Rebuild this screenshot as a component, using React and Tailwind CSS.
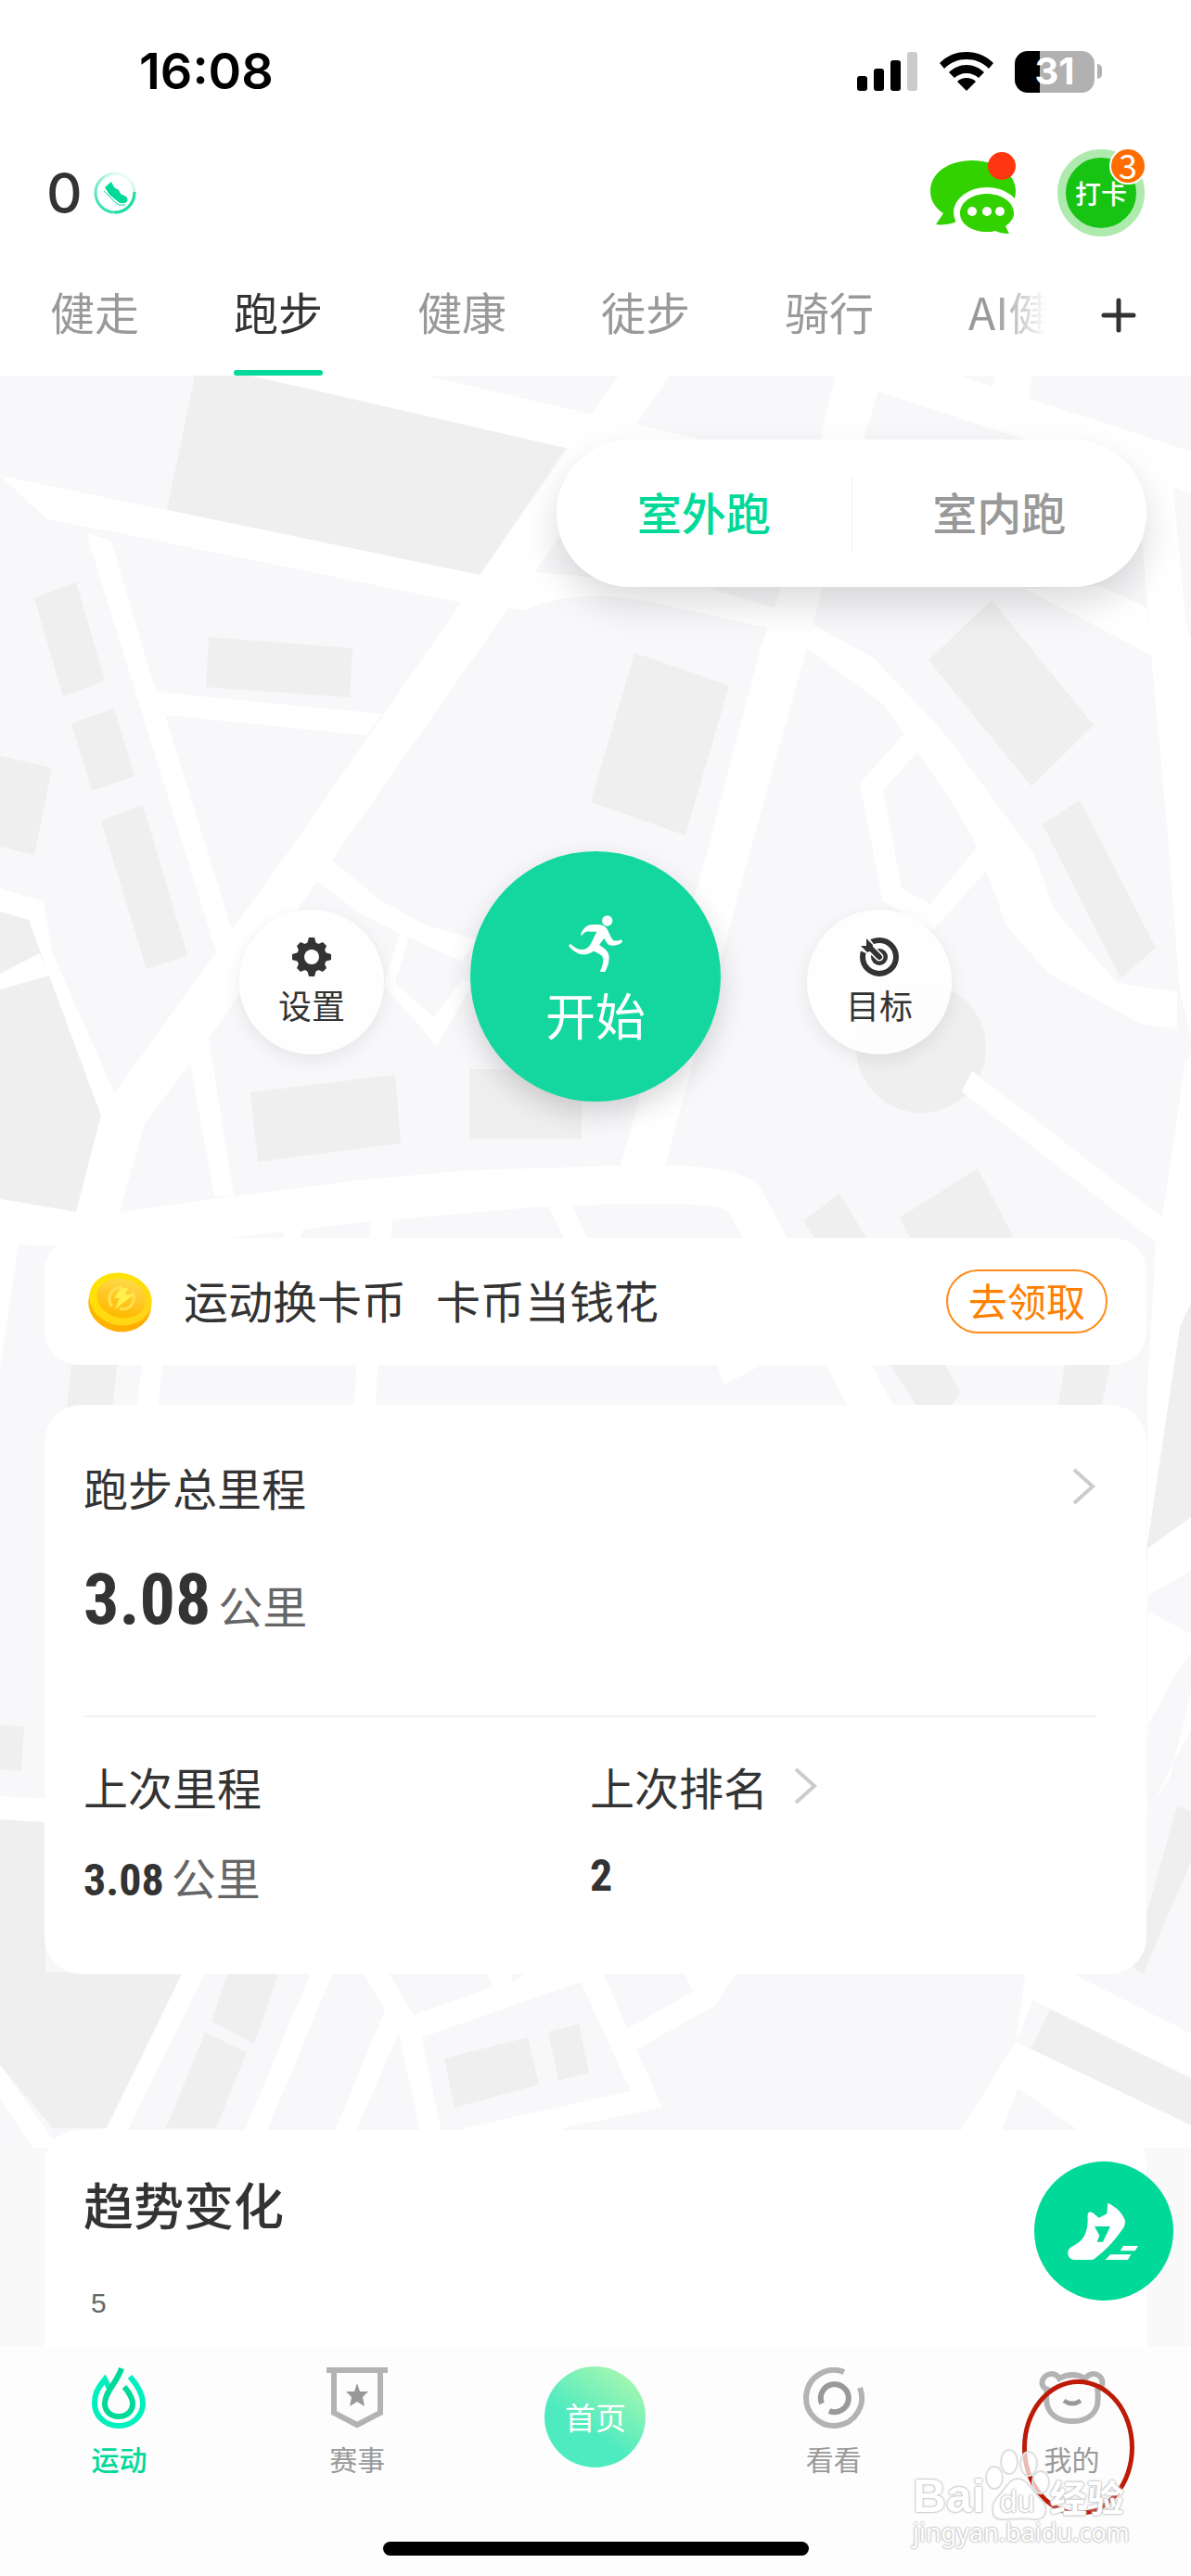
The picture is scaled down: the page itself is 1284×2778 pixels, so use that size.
import React, { useState } from 'react'

const cn = (...classes) => classes.filter(Boolean).join(' ')

const TABS = ['健走', '跑步', '健康', '徒步', '骑行', 'AI健身']

const StatusBar = () => (
  <div className="flex h-[150px] items-center justify-between pl-[150px] pr-[96px] pt-1 text-black">
    <span className="font-['Inter'] text-[54px] leading-none font-semibold">16:08</span>
    <div className="flex items-center gap-[23px]">
      <svg width="66" height="42" viewBox="0 0 66 42" aria-hidden="true">
        <rect x="0" y="26" width="11" height="16" rx="3" />
        <rect x="18" y="18" width="11" height="24" rx="3" />
        <rect x="36" y="9" width="11" height="33" rx="3" />
        <rect x="54" y="0" width="11" height="42" rx="3" fill="#cbcbcb" />
      </svg>
      <svg width="58" height="42" viewBox="0 0 58 42" aria-hidden="true">
        <path d="M29 0C18 0 8 4 0 12l5 6C12 11 20 8 29 8s17 3 24 10l5-6C50 4 40 0 29 0Z" />
        <path d="M29 14c-7 0-14 3-19 8l6 6c3-3 8-5 13-5s10 2 13 5l6-6c-5-5-12-8-19-8Z" />
        <path d="M29 28c-4 0-7 1-10 4l10 10 10-10c-3-3-6-4-10-4Z" />
      </svg>
      <div className="flex items-center gap-[3px]">
        <div className="flex h-[45px] w-[86px] items-center justify-center rounded-[14px] bg-[linear-gradient(90deg,#000_31%,#b1b1b1_31%)] font-['Inter'] text-[40px] leading-none font-bold text-white">
          31
        </div>
        <div className="h-4 w-[5px] rounded-r-full bg-[#b1b1b1]" />
      </div>
    </div>
  </div>
)

const StepRing = () => (
  <svg width="46" height="46" viewBox="0 0 46 46" fill="none" aria-hidden="true">
    <defs>
      <linearGradient id="ring" x1="0.2" y1="1" x2="0.8" y2="0">
        <stop offset="0" stopColor="#2be0ab" />
        <stop offset="0.5" stopColor="#7fecce" />
        <stop offset="1" stopColor="#fff" />
      </linearGradient>
    </defs>
    <circle cx="23" cy="23" r="21" stroke="url(#ring)" strokeWidth="3" />
    <path d="M44 22C44 34 35 44 23 44" stroke="#1fdda4" strokeWidth="3" />
    <path d="M12 17 19 11l3 6 5 3 2 4 6 3c3 3 1 7-2 7h-5L17 25Z" fill="#00d998" />
    <path d="m11 21 12 12 4 3h7" stroke="#00d998" strokeWidth="1" />
  </svg>
)

const ChatIcon = () => (
  <svg width="94" height="92" viewBox="0 0 94 92" aria-hidden="true">
    <path d="M46 9C20 9 1 23 1 42c0 10 5 18 14 24L7 78c8 1 15 0 22-3 8 2 20 2 30 0 22-5 34-17 34-33C93 23 72 9 46 9Z" fill="#32d200" />
    <ellipse cx="62" cy="65" rx="36" ry="27" fill="#fff" />
    <path d="M28 56v36h66V50Z" fill="#fff" />
    <path d="M62 45c-16 0-29 9-29 21s13 20 29 20c3 0 6 0 9-1 4 2 9 3 15 3l-4-8c5-4 9-8 9-14 0-12-13-21-29-21Z" fill="#32d200" />
    <circle cx="46" cy="64" r="5" fill="#fff" />
    <circle cx="62" cy="64" r="5" fill="#fff" />
    <circle cx="76" cy="64" r="5" fill="#fff" />
    <circle cx="78" cy="15" r="15" fill="#ff3610" />
  </svg>
)

const Header = () => (
  <header className="flex h-[116px] items-center justify-between pr-[50px] pl-[50px]">
    <div className="flex items-center gap-3">
      <span className="font-['Inter'] text-[60px] leading-none font-medium">0</span>
      <StepRing />
    </div>
    <div className="flex items-center gap-11">
      <button type="button" aria-label="消息" className="pt-1">
        <ChatIcon />
      </button>
      <button
        type="button"
        className="relative flex h-[94px] w-[94px] items-center justify-center rounded-full border-[9px] border-[#aeeaae] bg-[#17c313] text-[28px] leading-none font-medium text-white"
      >
        打卡
        <span className="absolute -top-[11px] -right-[11px] flex h-10 w-10 items-center justify-center rounded-full border-2 border-white bg-[#ff6c00] pb-1 text-[36px] leading-none font-normal">
          3
        </span>
      </button>
    </div>
  </header>
)

const SportTabs = ({ active, onChange }) => (
  <nav className="flex h-[139px]">
    <div className="flex min-w-0 flex-1 gap-[102px] overflow-hidden bg-white [mask-image:linear-gradient(90deg,#000_95%,transparent_100%)] pl-[54px]">
      {TABS.map((tab) => (
        <button
          key={tab}
          type="button"
          onClick={() => onChange(tab)}
          className={cn('flex shrink-0 flex-col justify-between text-[48px]', active === tab ? 'text-[#333]' : 'text-[#999]')}
        >
          <span className="mt-9 leading-[66px] whitespace-nowrap">{tab}</span>
          <span className={cn('h-[6px] w-full rounded-[3px]', active === tab && 'bg-[#00d998]')} />
        </button>
      ))}
    </div>
    <button type="button" aria-label="添加" className="flex w-[156px] items-center justify-center pt-2">
      <svg width="38" height="38" viewBox="0 0 38 38" stroke="#333" strokeWidth="5" strokeLinecap="round" aria-hidden="true">
        <path d="M19 3v32M3 19h32" />
      </svg>
    </button>
  </nav>
)

// City map behind the cards: buildings first, streets on top
const CityMap = () => (
  <svg viewBox="0 405 1284 1911" className="w-full self-start [grid-area:1/1]" aria-hidden="true">
    <rect y="405" width="1284" height="1911" fill="#f8f8fa" />
    <g fill="#efefef">
      <path d="M210 405h60l340 78-93 137-337-70Z" />
      <path d="m82 628 31 106-45 17-31-106Z" />
      <path d="m225 687 155 12-3 53-155-11Z" />
      <path d="m123 764 22 73-46 16-22-73Z" />
      <path d="m0 815 56 13-19 94-37-9Z" />
      <path d="m154 868 48 162-44 15-49-160Z" />
      <path d="m684 704 102 35-47 162-102-36Z" />
      <path d="m1069 647 110 135-67 66-111-136Z" />
      <path d="m1164 863 82 159-38 33-84-166Z" />
      <path d="m0 983 31 9 22 60-53 0ZM0 1067l53-15 56 151-27 104-82-14Z" />
      <path d="m270 1178 156-19 6 74-154 20Z" />
      <path d="M506 1153h121v75H506Z" />
      <circle cx="993" cy="1130" r="70" />
      <path d="m905 1287 29 48h-56l-12-18ZM1054 1260l39 75H981l-11-22Z" />
      <path d="M78 1465h49l-6 55H72ZM955 1465h60l21 37-14 18h-31ZM1149 1465h49l-11 55h-47Z" />
      <path d="m1284 1405-12 25-36 241v10l48-35Z" />
      <path d="m0 1860 26 2-3 48-23-2ZM0 1962l49 3v162h148l-82 168H57L0 2227Z" />
      <path d="M248 2120h55l-29 84-46-24ZM221 2192l45 21-33 82h-54Z" />
      <path d="m569 2197 12 51-91 25-11-53ZM624 2183l11 52-33 9-11-53Z" />
      <path d="m1132 2167 152 75v50l-173-82ZM1269 1948l15 5v54l-52 123-12-10Z" />
    </g>
    <g fill="#fff">
      <path d="M270 405h189l301 70 140 45v60l-290-97Z" />
      <path d="M667 405h55L577 617l-34 46-180 257-21 30-117 170-20 27-49 65-27 95H82l27-104 14-23 127-177 60-83Z" />
      <path d="m0 513 180 37 337 70 60-3 185 16 73 23 41 17 66 37 73 77 99 133 23 62 67 78 65 10v40l-39-6-99-54-45-50-28-75-11-25-26-43-68-97-108-79-125-28c-50-12-110-16-153 5l-53-5-370-75-93-18Z" />
      <path d="M901 405h51l-21 68-44 160-21 80-58 207-91 337h-48l93-337 59-225 14-39 49-183Z" />
      <path d="M940 405h94l250 82v45L946 422ZM1073 405h39l-4 27-38-12Z" />
      <path d="m1222 480 43 47 14 150 5 10v428l-12-45-13-170-18-195-9-115Z" />
      <path d="m1105 635 82-3 49 23 6 52Z" />
      <path d="m93 575 27 8 48 163 10 25 72 232-25 117 27 170h-21l-26-143 28-120-33-107Z" />
      <path d="m168 746 244 24-17 23-217-22Z" />
      <path d="m974 792 18 16-40 44 20 106 31 17 59-72 11 25-67 75-54-31-25-127Z" />
      <path d="m358 928 51 42 50 28 54 15-15 24-66-30-47-24-43-33Z" />
      <path d="m432 1002 8 12-14 46 41 37 31-40 12 3-39 68-57-65Z" />
      <path d="m0 958 47 14 9 55 68 153-15 23-56-151-22-60-31-9ZM0 1050l43-22 10 24-53 15Z" />
      <path d="M0 1293l82 14h47l123-17 141-18 115-10 161-5h48c50 0 96 8 104 26l27 52h-47l-15-27c-5-8-30-10-115-10l-98 4-180 16-147 17-46 15-180-8-20 133Z" />
      <path d="m307 1325 21-3-6 18h-17ZM401 1310h23l-16 158-4 52h-23l4-52ZM590 1298h26l17 37h-25ZM154 1465h22l-6 55h-23Z" />
      <path d="m771 1465 50 7-41 22ZM887 1465h49l29 55h-50Z" />
      <path d="m1048 1155 205 158 16-106 8-60 7-10v268l-12 25-36 241 48-35v58l-48 27v16l48 25v20l-16 22-30 56-2 95 26-40 23-95v43l-48 92V1500l9-160-209-163Z" />
      <path d="m0 1937 49 3v25l-49-3ZM0 2227l57 80 58-12 82-168h24l-82 168v21H35L0 2263Z" />
      <path d="M338 2120h24l-73 175v21h-24v-21ZM387 2120h27l32 53 85-30-9-23h25l6 17 28-17h66l29 68 71-40-12-28h63l-27 43-85 47 28 63-108 22v21H500v-21l180-40-54-118-171 60 20 98v21h-23v-21l-22-103-45 103v21h-23v-21l53-127Z" />
      <path d="m1107 2120 46 7 131 66v47l-170-83-19 45 189 90v24h-94l-93-64-16 43v21h-44v-21l58-93Z" />
    </g>
  </svg>
)

const RunModeSwitch = () => {
  const [mode, setMode] = useState('室外跑')
  return (
    <div className="mt-[69px] mr-12 flex h-[159px] w-[636px] max-w-full items-center self-end rounded-full bg-white shadow-[0_18px_40px_rgba(0,0,0,0.14)]">
      {['室外跑', '室内跑'].map((name, i) => (
        <button
          key={name}
          type="button"
          onClick={() => setMode(name)}
          className={cn(
            'h-20 flex-1 pb-1.5 text-[48px] leading-none font-medium',
            i === 0 && 'border-r border-[#f0f0f0]',
            mode === name ? 'text-[#00d998]' : 'text-[#999]'
          )}
        >
          {name}
        </button>
      ))}
    </div>
  )
}

const GearIcon = () => (
  <svg width="42" height="42" viewBox="0 0 42 42" aria-hidden="true">
    <g fill="#333">
      <circle cx="21" cy="21" r="16" />
      <path d="M18 0h6l2 7H16ZM18 42h6l2-7H16ZM0 18v6l7 2V16ZM42 18v6l-7 2V16Z" />
      <path d="m5 9 4-4 7 3-8 8ZM37 9l-4-4-7 3 8 8ZM5 33l4 4 7-3-8-8ZM37 33l-4 4-7-3 8-8Z" />
    </g>
    <circle cx="21" cy="21" r="8" fill="#fff" />
  </svg>
)

const TargetIcon = () => (
  <svg width="42" height="42" viewBox="0 0 42 42" fill="none" aria-hidden="true">
    <circle cx="21" cy="21" r="18" stroke="#333" strokeWidth="6" />
    <circle cx="21" cy="21" r="9" fill="#333" />
    <path d="M0 2h11l8 10-8 7L0 14Z" fill="#fff" />
    <path d="m12 12 9 9" stroke="#fff" strokeWidth="9" strokeLinecap="round" />
    <path d="m10 10 11 11" stroke="#333" strokeWidth="6" strokeLinecap="round" />
    <path d="M7 1 14 8l-1 6-5 2-7-7h6Z" fill="#333" />
  </svg>
)

const RunnerIcon = () => (
  <svg width="58" height="61" viewBox="0 0 174 183" fill="#fff" aria-hidden="true">
    <circle cx="125" cy="18" r="17" />
    <path d="M39 62C47 42 60 30 80 30c25-1 39 2 46 17 7 14 12 30 21 35 7 2 16 0 24-3l3 8c-12 10-28 13-41 10-9-4-14-15-18-23l-16 22 16 11c11 8 16 18 16 31 0 15-5 30-13 45h-17c7-14 11-27 11-39 0-14-12-20-31-28-16 10-30 13-44 10-14-4-27-15-37-27l6-7c14 14 26 20 40 19 17-2 23-13 30-27l15-31H72c-14-2-22 1-30 13Z" />
  </svg>
)

const RoundAction = ({ icon, label }) => (
  <button
    type="button"
    className="mt-3 flex h-[156px] w-[156px] shrink-0 flex-col items-center rounded-full bg-white/90 pt-[30px] text-[36px] shadow-[0_6px_20px_rgba(0,0,0,0.08)]"
  >
    {icon}
    <span className="mt-1.5 leading-[48px]">{label}</span>
  </button>
)

const StartRow = () => (
  <div className="mt-[285px] flex items-center justify-center gap-[93px]">
    <RoundAction icon={<GearIcon />} label="设置" />
    <button
      type="button"
      className="flex h-[270px] w-[270px] shrink-0 flex-col items-center rounded-full bg-[#14d79f] pt-[69px] text-[54px] text-white shadow-[0_12px_30px_rgba(0,0,0,0.16)]"
    >
      <RunnerIcon />
      <span className="mt-2.5 leading-[72px]">开始</span>
    </button>
    <RoundAction icon={<TargetIcon />} label="目标" />
  </div>
)

const CoinIcon = () => (
  <svg width="70" height="66" viewBox="0 0 70 66" fill="none" aria-hidden="true">
    <defs>
      <linearGradient id="coin" x1="0" y1="0" x2="1" y2="1">
        <stop offset="0" stopColor="#ffe600" />
        <stop offset="1" stopColor="#ffd21a" />
      </linearGradient>
      <linearGradient id="coinEdge" x1="0" y1="0" x2="1" y2="1">
        <stop offset="0" stopColor="#ffc400" />
        <stop offset="1" stopColor="#ffa800" />
      </linearGradient>
      <linearGradient id="coinFace" x1="0.5" y1="0" x2="0.5" y2="1">
        <stop offset="0" stopColor="#ffd84a" />
        <stop offset="1" stopColor="#ffb800" />
      </linearGradient>
    </defs>
    <ellipse cx="35" cy="36" rx="34" ry="29" transform="rotate(14 35 36)" fill="url(#coinEdge)" />
    <ellipse cx="36" cy="30" rx="34" ry="28" transform="rotate(14 36 30)" fill="url(#coin)" />
    <ellipse cx="37" cy="29" rx="27" ry="21" transform="rotate(14 37 29)" fill="url(#coinFace)" />
    <path d="M38 17c-8 0-14 5-14 13 0 3 1 6 3 8M48 22c3 4 3 10 0 14s-8 6-13 4" stroke="#ffe14d" strokeWidth="3" />
    <path d="M36 18h8l-3 7h9L30 41l5-12h-6Z" fill="#fff04d" />
  </svg>
)

const Chevron = () => (
  <svg width="26" height="40" viewBox="0 0 26 40" fill="none" stroke="#ccc" strokeWidth="4" aria-hidden="true">
    <path d="m2 2 20 18L2 38" />
  </svg>
)

const CoinCard = () => (
  <section className="mx-12 mt-[147px] flex h-[137px] items-center rounded-[36px] bg-white pr-[42px] pl-[46px]">
    <CoinIcon />
    <p className="ml-[34px] flex gap-8 pb-1.5 text-[48px] leading-none whitespace-nowrap">
      <span>运动换卡币</span>
      <span>卡币当钱花</span>
    </p>
    <button
      type="button"
      className="ml-auto h-[69px] w-[174px] shrink-0 rounded-full border-2 border-[#ff8c1a] pb-1 text-[42px] leading-none text-[#ff8000]"
    >
      去领取
    </button>
  </section>
)

const Distance = ({ value, large }) => (
  <p className="flex items-baseline gap-2">
    <span
      className={cn(
        "font-['Roboto_Condensed','Liberation_Sans_Narrow','Liberation_Sans'] font-bold",
        large ? 'text-[76px] leading-[96px]' : 'text-[48px] leading-[66px]'
      )}
    >
      {value}
    </span>
    <span className="text-[48px] leading-[66px] text-[#666]">公里</span>
  </p>
)

const MileageCard = () => (
  <section className="mx-12 mt-[43px] rounded-[40px] bg-white px-[42px] pt-[54px] pb-[68px]">
    <a href="#total" className="flex items-center justify-between pr-3">
      <h2 className="text-[48px] leading-[68px]">跑步总里程</h2>
      <Chevron />
    </a>
    <div className="mt-10">
      <Distance value="3.08" large />
    </div>
    <div className="mt-[77px] mr-3 grid grid-cols-[546px_1fr] border-t-2 border-[#f2f2f2] pt-10">
      <div>
        <h3 className="text-[48px] leading-[68px]">上次里程</h3>
        <div className="mt-[30px]">
          <Distance value="3.08" />
        </div>
      </div>
      <div>
        <a href="#rank" className="flex items-center gap-7">
          <h3 className="text-[48px] leading-[68px]">上次排名</h3>
          <Chevron />
        </a>
        <p className="mt-[30px] font-['Roboto_Condensed','Liberation_Sans_Narrow','Liberation_Sans'] text-[48px] leading-[66px] font-bold">
          2
        </p>
      </div>
    </div>
  </section>
)

const TrendCard = () => (
  <section className="mx-12 mt-[168px] h-[233px] rounded-t-[36px] bg-white px-[42px] pt-10">
    <h2 className="text-[54px] leading-[80px] font-medium">趋势变化</h2>
    <p className="mt-[52px] ml-2 font-['Liberation_Sans'] text-[30px] leading-[30px] text-[#666]">5</p>
  </section>
)

const ShoeButton = () => (
  <button
    type="button"
    aria-label="跑鞋"
    className="absolute right-[19px] bottom-[49px] z-20 h-[150px] w-[150px] rounded-full bg-[#00d998]"
  >
    <svg width="150" height="150" viewBox="45 27 450 450" fill="#fff" aria-hidden="true">
      <path d="M283 161c28 14 47 32 55 55 3 15-3 25-12 36-25 35-52 65-86 89-4 3-8 4-14 4h-50c-16 0-24-12-22-26 2-12 13-17 24-23 32-18 40-48 40-84-1-12 0-21 8-22l10 4 18 15 26-13Z" />
      <path d="M240 237h51l-24 50h-19l8-20Z" fill="#00d998" />
      <path d="M333 300h48l-10 16h-48ZM291 328h67l-10 17h-73Z" />
    </svg>
  </button>
)

const FlameIcon = () => (
  <svg width="60" height="68" viewBox="0 0 60 68" fill="none" aria-hidden="true">
    <path d="M20 24 15 14C6 25 4 31 4 40c0 13 11 24 26 24s26-11 26-24c0-10-5-19-14-29" stroke="#00f0c0" strokeWidth="6" />
    <path d="M33 2C28 18 15 27 15 40c0 8 6 14 15 14s15-6 15-14c0-6-4-12-9-18" stroke="#00d998" strokeWidth="6" />
  </svg>
)

const BadgeIcon = () => (
  <svg width="66" height="66" viewBox="0 0 66 66" fill="none" aria-hidden="true">
    <path d="M0 3h66" stroke="#b3b3b3" strokeWidth="6" />
    <path d="M8 5v44l25 13 25-13V5" stroke="#b3b3b3" strokeWidth="6" />
    <path d="m33 17 3 9h9l-6 6 2 10-8-5-8 5 2-10-6-6h9Z" fill="#999" />
  </svg>
)

const SwirlIcon = () => (
  <svg width="66" height="66" viewBox="0 0 66 66" fill="none" aria-hidden="true">
    <path d="M44 5A30 30 0 1 0 61 22" stroke="#b3b3b3" strokeWidth="6" />
    <path d="M20 39A15 15 0 1 1 28 47" stroke="#999" strokeWidth="6" />
  </svg>
)

const BearIcon = () => (
  <svg width="72" height="58" viewBox="0 0 72 58" fill="none" strokeWidth="6" aria-hidden="true">
    <path d="M9 20C-1 16 4 3 14 3c4 0 6 2 8 5 9-5 19-5 28 0 3-4 5-5 9-5 9 0 14 13 4 17M9 17c-1 8-1 16 0 20 3 10 12 17 27 17s24-7 27-17c1-7 1-12 0-19" stroke="#b3b3b3" />
    <path d="M27 32q9 6 18 0" stroke="#999" strokeWidth="5" />
  </svg>
)

const NavItem = ({ icon, label, active }) => (
  <a href="#nav" className="flex flex-1 flex-col items-center">
    <span className="flex h-[68px] items-center">{icon}</span>
    <span className={cn('mt-2.5 text-[30px] leading-[42px]', active ? 'font-medium text-[#00d998]' : 'text-[#999]')}>{label}</span>
  </a>
)

const Watermark = () => (
  <div className="absolute right-[66px] bottom-[35px] w-[234px] text-white [text-shadow:0_0_2px_#bbb,0_0_2px_#bbb,0_0_3px_#ccc]">
    <div className="relative flex items-baseline leading-[40px] font-bold">
      <span className="font-['Liberation_Sans'] text-[50px]">Bai</span>
      <svg className="absolute -top-8 left-[78px]" width="70" height="80" viewBox="0 0 70 80" fill="#fff" fillOpacity="0.7" stroke="#dedede" strokeWidth="2" aria-hidden="true">
        <ellipse cx="10" cy="32" rx="9" ry="12" />
        <ellipse cx="26" cy="15" rx="9" ry="13" />
        <ellipse cx="47" cy="17" rx="9" ry="13" />
        <ellipse cx="60" cy="37" rx="9" ry="12" />
        <path d="M35 33c-9 0-12 10-20 18-8 7-12 26 4 26 9 0 25-2 34 0 14 1 16-13 7-22-9-8-14-22-25-22Z" />
      </svg>
      <span className="relative ml-4 font-['Liberation_Sans'] text-[34px] font-normal">du</span>
      <span className="relative ml-4 text-[40px]">经验</span>
    </div>
    <div className="font-['Noto_Sans'] text-[27px] leading-[28px]">jingyan.baidu.com</div>
  </div>
)

const BottomNav = () => (
  <footer className="relative flex h-[250px] flex-col items-center justify-between bg-[#fdfdfd] pt-[22px] pb-6">
    <nav className="flex w-full">
      <NavItem active icon={<FlameIcon />} label="运动" />
      <NavItem icon={<BadgeIcon />} label="赛事" />
      <a href="#home" className="flex flex-1 justify-center">
        <span className="flex h-[109px] w-[109px] items-center justify-center rounded-full bg-[linear-gradient(215deg,#a8f7b0_10%,#4febc0_60%)] text-[33px] leading-none text-white">
          首页
        </span>
      </a>
      <NavItem icon={<SwirlIcon />} label="看看" />
      <NavItem icon={<BearIcon />} label="我的" />
    </nav>
    <div className="h-[15px] w-[459px] rounded-full bg-black" />
    <div className="absolute top-[36px] right-[61px] h-[147px] w-[121px] rounded-[50%] border-[5px] border-[#bd1a08]" />
    <Watermark />
  </footer>
)

export default function App() {
  const [tab, setTab] = useState('跑步')
  return (
    <div className="flex min-h-screen flex-col bg-white font-['Noto_Sans_CJK_SC',sans-serif] text-[#333]">
      <StatusBar />
      <Header />
      <SportTabs active={tab} onChange={setTab} />
      <main className="relative grid flex-1 overflow-hidden bg-[#f9f9f9]">
        <CityMap />
        <div className="z-10 flex min-w-0 flex-col [grid-area:1/1]">
          <RunModeSwitch />
          <StartRow />
          <CoinCard />
          <MileageCard />
          <TrendCard />
        </div>
        <ShoeButton />
      </main>
      <BottomNav />
    </div>
  )
}
